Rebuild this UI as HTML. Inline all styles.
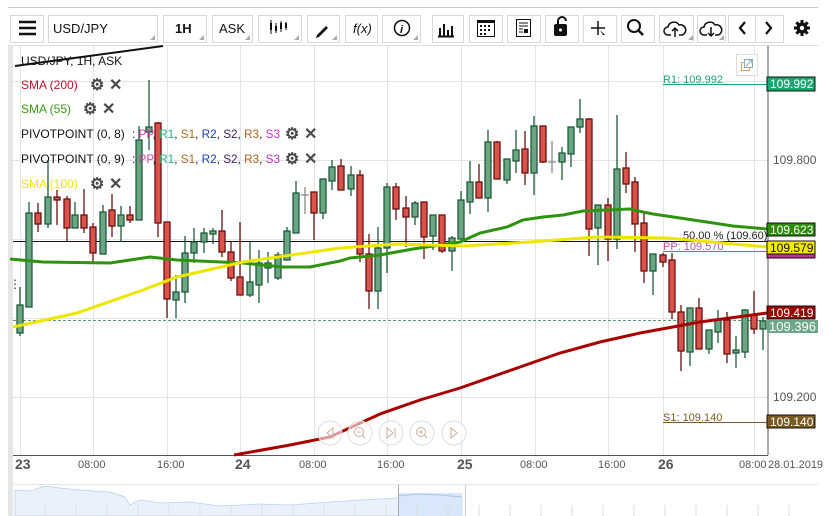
<!DOCTYPE html>
<html><head><meta charset="utf-8"><style>
body{margin:0;width:829px;height:516px;overflow:hidden;background:#fff;font-family:"Liberation Sans",sans-serif}
svg{position:absolute;left:0;top:0}
.b{fill:#fff;stroke:#d8d8d8}
text{font-family:"Liberation Sans",sans-serif}
</style></head><body>
<svg width="829" height="516" viewBox="0 0 829 516">
<line x1="8" y1="7.5" x2="818" y2="7.5" stroke="#ccc"/>
<line x1="8" y1="45.5" x2="818" y2="45.5" stroke="#ddd"/>
<rect class="b" x="10.5" y="15.5" width="33" height="27"/>
<rect class="b" x="48.5" y="15.5" width="109" height="27"/>
<rect class="b" x="163.5" y="15.5" width="43" height="27"/>
<rect class="b" x="212.5" y="15.5" width="40" height="27"/>
<rect class="b" x="258.5" y="15.5" width="43" height="27"/>
<rect class="b" x="307.5" y="15.5" width="32" height="27"/>
<rect class="b" x="345.5" y="15.5" width="32" height="27"/>
<rect class="b" x="382.5" y="15.5" width="38" height="27"/>
<rect class="b" x="432.5" y="15.5" width="31" height="27"/>
<rect class="b" x="469.5" y="15.5" width="33" height="27"/>
<rect class="b" x="507.5" y="15.5" width="33" height="27"/>
<rect class="b" x="545.5" y="15.5" width="33" height="27"/>
<rect class="b" x="583.5" y="15.5" width="33" height="27"/>
<rect class="b" x="621.5" y="15.5" width="33" height="27"/>
<rect class="b" x="659.5" y="15.5" width="34" height="27"/>
<rect class="b" x="697.5" y="15.5" width="28" height="27"/>
<rect class="b" x="728.5" y="15.5" width="55" height="27"/>
<line x1="755.5" y1="15" x2="755.5" y2="43" stroke="#ddd"/>
<path d="M19 22h17M19 28h17M19 34h17" stroke="#111" stroke-width="2.4"/>
<text x="53" y="33" font-size="13" fill="#111">USD/JPY</text>
<text x="175" y="33" font-size="13" font-weight="bold" fill="#111">1H</text>
<text x="219" y="33" font-size="13" fill="#111">ASK</text>
<g fill="#aaa"><path d="M155 40h-5l5-5z"/><path d="M204 40h-5l5-5z"/><path d="M250 40h-5l5-5z"/><path d="M299 40h-5l5-5z"/><path d="M337 40h-5l5-5z"/><path d="M418 40h-5l5-5z"/><path d="M693 40h-5l5-5z"/><path d="M724 40h-5l5-5z"/></g>
<path d="M271 20v14M276 23v10M281 21v11M286 22v8" stroke="#111" stroke-width="1"/>
<g fill="#111"><rect x="270" y="23" width="2" height="7"/><rect x="275" y="26" width="2" height="5"/><rect x="280" y="23" width="2" height="6"/><rect x="285" y="23" width="2" height="5"/></g>
<path d="M317 35l9-9 2 2-9 9-3 1z" fill="#111"/>
<text x="353" y="33" font-size="13" font-style="italic" font-family="Liberation Serif" fill="#111">f(x)</text>
<circle cx="402" cy="28" r="7.5" fill="none" stroke="#111" stroke-width="1.5"/><text x="400" y="33" font-size="11" font-weight="bold" font-style="italic" font-family="Liberation Serif" fill="#111">i</text>
<path d="M440 36v-8M444 36v-12M448 36v-6M452 36v-10M438 36.5h16" stroke="#111" stroke-width="2"/>
<rect x="477.5" y="20.5" width="17" height="16" fill="#fff" stroke="#111"/><rect x="477" y="20" width="18" height="3" fill="#111"/>
<g fill="#111"><rect x="480" y="25" width="2" height="2"/><rect x="484" y="25" width="2" height="2"/><rect x="488" y="25" width="2" height="2"/><rect x="480" y="29" width="2" height="2"/><rect x="484" y="29" width="2" height="2"/><rect x="488" y="29" width="2" height="2"/><rect x="480" y="33" width="2" height="2"/><rect x="484" y="33" width="2" height="2"/></g>
<rect x="516.5" y="19.5" width="14" height="17" fill="#fff" stroke="#111"/><path d="M519 23h9M519 26h9M519 29h4M519 32h4" stroke="#111"/><rect x="524" y="29" width="4" height="4" fill="#111"/>
<path d="M558 24v-3a4 4 0 0 1 8 0" fill="none" stroke="#111" stroke-width="2"/><rect x="554" y="24" width="13" height="12" rx="2" fill="#111"/><circle cx="560.5" cy="30" r="1.5" fill="#fff"/>
<path d="M598 21v14M591 28h14" stroke="#111" stroke-width="1.5"/><path d="M600 30l5 5-2 0z" fill="#111"/>
<circle cx="634" cy="26" r="6" fill="none" stroke="#111" stroke-width="2"/><path d="M638 30l5 5" stroke="#111" stroke-width="2.5"/>
<path d="M671 35h-3a4 4 0 0 1 0-8 6 6 0 0 1 11-2 4 4 0 0 1 3 10h-3" fill="none" stroke="#111" stroke-width="1.5"/><path d="M675 37v-9M672 31l3-3 3 3" fill="none" stroke="#111" stroke-width="1.5"/>
<path d="M707 35h-3a4 4 0 0 1 0-8 6 6 0 0 1 11-2 4 4 0 0 1 3 10h-3" fill="none" stroke="#111" stroke-width="1.5"/><path d="M711 27v9M708 33l3 3 3-3" fill="none" stroke="#111" stroke-width="1.5"/>
<path d="M745 22l-5 6 5 6M766 22l5 6-5 6" fill="none" stroke="#111" stroke-width="2.2"/>
<g transform="translate(802 28)"><circle r="5.5" fill="#111"/><path d="M-1.5-8h3v16h-3zM-8-1.5h16v3h-16z" fill="#111"/><path d="M-1.5-8h3v16h-3zM-8-1.5h16v3h-16z" fill="#111" transform="rotate(45)"/><circle r="2.2" fill="#fff"/></g>

<rect x="8" y="46" width="5" height="470" fill="#e6e6e6"/>
<g stroke="#e3e3e3" stroke-width="1">
<path d="M13 81.5h755M13 160.5h755M13 239.5h755M13 318.5h755M13 397.5h755"/>
<path d="M20.5 46v409M93.5 46v409M167.5 46v409M240.5 46v409M314.5 46v409M387.5 46v409M461.5 46v409M535.5 46v409M608.5 46v409M663.5 46v409M754.5 46v409"/>
</g>
<line x1="768" y1="46" x2="768" y2="455" stroke="#555"/>
<line x1="13" y1="455.5" x2="768" y2="455.5" stroke="#555"/>
<line x1="13" y1="484.5" x2="818" y2="484.5" stroke="#e6e6e6"/>

<line x1="13" y1="241.5" x2="768" y2="241.5" stroke="#111"/>
<line x1="13" y1="320.5" x2="768" y2="320.5" stroke="#5a9a78" stroke-dasharray="3,2"/>
<line x1="663" y1="84.5" x2="768" y2="84.5" stroke="#1aa870"/>
<line x1="663" y1="251.5" x2="768" y2="251.5" stroke="#c050a0"/>
<line x1="663" y1="422.5" x2="768" y2="422.5" stroke="#7a5a20"/>
<text x="663" y="83" font-size="11" fill="#1aa870">R1: 109.992</text>
<text x="683" y="239" font-size="11" fill="#222">50.00 % (109.60)</text>
<text x="663" y="250" font-size="11" fill="#c050a0">PP: 109.570</text>
<text x="663" y="421" font-size="11" fill="#7a5a20">S1: 109.140</text>

<g stroke-width="1.3">
<g stroke="#1f5a3a" fill="#6aa684">
<path d="M20 287v49M29 202v105M48 160v68M75 202v26M103 205v49M121 206v36M139 126v94M149 80v70M176 275v43M185 236v67M194 228v35M204 228v25M213 228v16M250 242v55M259 250v53M268 252v31M278 252v28M287 227v33M296 181v52M323 179v40M332 160v30M351 166v30M378 227v82M387 183v90M415 201v24M433 215v35M452 236v35M461 191v48M470 161v53M488 130v82M507 159v25M516 130v43M534 116v79M562 147v33M571 127v40M580 99v34M598 205v60M617 115v134M653 254v41M690 308v58M709 330v24M718 310v33M736 336v32M745 309v49M763 317v33"/>
<rect x="17" y="305" width="6" height="28"/><rect x="26" y="213" width="6" height="94"/><rect x="45" y="197" width="6" height="27"/><rect x="72" y="215" width="6" height="13"/><rect x="100" y="212" width="6" height="42"/><rect x="118" y="215" width="6" height="11"/><rect x="136" y="140" width="6" height="80"/><rect x="146" y="127" width="6" height="5"/><rect x="173" y="292" width="6" height="8"/><rect x="182" y="253" width="6" height="39"/><rect x="191" y="242" width="6" height="11"/><rect x="201" y="233" width="6" height="9"/><rect x="210" y="231" width="6" height="3"/><rect x="247" y="282" width="6" height="13"/><rect x="256" y="263" width="6" height="22"/><rect x="265" y="263" width="6" height="5"/><rect x="275" y="255" width="6" height="23"/><rect x="284" y="231" width="6" height="29"/><rect x="293" y="193" width="6" height="40"/><rect x="320" y="179" width="6" height="34"/><rect x="329" y="167" width="6" height="14"/><rect x="348" y="175" width="6" height="14"/><rect x="375" y="248" width="6" height="43"/><rect x="384" y="187" width="6" height="61"/><rect x="412" y="203" width="6" height="14"/><rect x="430" y="215" width="6" height="21"/><rect x="449" y="238" width="6" height="13"/><rect x="458" y="200" width="6" height="39"/><rect x="467" y="182" width="6" height="20"/><rect x="485" y="142" width="6" height="56"/><rect x="504" y="159" width="6" height="21"/><rect x="513" y="150" width="6" height="11"/><rect x="531" y="126" width="6" height="47"/><rect x="559" y="153" width="6" height="9"/><rect x="568" y="127" width="6" height="27"/><rect x="577" y="119" width="6" height="8"/><rect x="595" y="205" width="6" height="23"/><rect x="614" y="169" width="6" height="70"/><rect x="650" y="254" width="6" height="17"/><rect x="687" y="308" width="6" height="44"/><rect x="706" y="330" width="6" height="19"/><rect x="715" y="320" width="6" height="12"/><rect x="733" y="350" width="6" height="3"/><rect x="742" y="310" width="6" height="42"/><rect x="760" y="321" width="6" height="8"/>
</g>
<g stroke="#6a1010" fill="#d9534a">
<path d="M38 203v29M57 190v35M67 196v45M84 189v44M93 223v40M112 194v43M130 206v17M158 122v115M167 222v96M222 210v47M231 242v39M240 222v73M314 192v48M341 159v31M360 170v92M369 234v75M396 183v37M406 196v51M424 202v57M442 215v38M479 164v34M497 141v38M525 131v54M543 126v37M589 118v138M608 198v63M626 152v41M635 177v75M644 212v71M663 253v14M672 253v66M681 305v66M699 298v51M727 312v51M754 291v43"/>
<rect x="35" y="213" width="6" height="11"/><rect x="54" y="197" width="6" height="3"/><rect x="64" y="199" width="6" height="29"/><rect x="81" y="215" width="6" height="13"/><rect x="90" y="227" width="6" height="26"/><rect x="109" y="210" width="6" height="16"/><rect x="127" y="215" width="6" height="5"/><rect x="155" y="123" width="6" height="100"/><rect x="164" y="222" width="6" height="77"/><rect x="219" y="231" width="6" height="21"/><rect x="228" y="252" width="6" height="26"/><rect x="237" y="277" width="6" height="18"/><rect x="311" y="192" width="6" height="21"/><rect x="338" y="166" width="6" height="24"/><rect x="357" y="175" width="6" height="79"/><rect x="366" y="254" width="6" height="37"/><rect x="393" y="187" width="6" height="22"/><rect x="403" y="208" width="6" height="9"/><rect x="421" y="202" width="6" height="35"/><rect x="439" y="215" width="6" height="36"/><rect x="476" y="182" width="6" height="16"/><rect x="494" y="142" width="6" height="37"/><rect x="522" y="149" width="6" height="24"/><rect x="540" y="126" width="6" height="36"/><rect x="586" y="119" width="6" height="110"/><rect x="605" y="205" width="6" height="34"/><rect x="623" y="168" width="6" height="16"/><rect x="632" y="182" width="6" height="42"/><rect x="641" y="223" width="6" height="48"/><rect x="660" y="255" width="6" height="7"/><rect x="669" y="260" width="6" height="52"/><rect x="678" y="312" width="6" height="39"/><rect x="696" y="308" width="6" height="41"/><rect x="724" y="320" width="6" height="34"/><rect x="751" y="315" width="6" height="14"/>
</g>
<path d="M305 187v27M301 195h8M552 141v32M548 162h8" stroke="#888" fill="none"/>
</g>

<path d="M10 259 L43 262 L110 263 L150 257 L177 260 L243 263 L283 267 L310 267 L340 261 L350 258 L380 255 L413 249 L460 242 L480 233 L507 227 L523 220 L543 217 L563 215 L583 211 L630 209 L643 212 L653 214 L700 221 L733 226 L767 229" fill="none" stroke="#2e9410" stroke-width="3"/>
<path d="M13 327 L77 313 L143 290 L177 277 L243 262 L340 248 L397 244 L463 246 L530 242 L597 237 L667 238 L767 247" fill="none" stroke="#ede600" stroke-width="3"/>
<path d="M234 455 L290 445 L330 437 L380 414 L420 400 L460 388 L500 374 L560 353 L600 342 L640 333 L700 322 L767 313" fill="none" stroke="#a80000" stroke-width="3"/>
<path d="M15 66 L163 46" stroke="#111" stroke-width="2"/>

<g font-size="12">
<text x="21" y="65" fill="#111">USD/JPY, 1H, ASK</text>
<text x="21" y="89" fill="#c0102a">SMA (200)</text>
<text x="21" y="113" fill="#3a9a18">SMA (55)</text>
<text x="21" y="138" fill="#111">PIVOTPOINT (0, 8)</text>
<text x="132" y="138" fill="#111" textLength="148" lengthAdjust="spacingAndGlyphs">: <tspan fill="#d040a0">PP</tspan>, <tspan fill="#20b080">R1</tspan>, <tspan fill="#a07020">S1</tspan>, <tspan fill="#2040c0">R2</tspan>, <tspan fill="#402060">S2</tspan>, <tspan fill="#b06020">R3</tspan>, <tspan fill="#c030c0">S3</tspan></text>
<text x="21" y="163" fill="#111">PIVOTPOINT (0, 9)</text>
<text x="132" y="163" fill="#111" textLength="148" lengthAdjust="spacingAndGlyphs">: <tspan fill="#d040a0">PP</tspan>, <tspan fill="#20b080">R1</tspan>, <tspan fill="#a07020">S1</tspan>, <tspan fill="#2040c0">R2</tspan>, <tspan fill="#402060">S2</tspan>, <tspan fill="#b06020">R3</tspan>, <tspan fill="#c030c0">S3</tspan></text>
<text x="21" y="188" fill="#f0e600">SMA (100)</text>
</g>
<g font-size="16" font-weight="bold" fill="#4a4a4a">
<text x="90" y="90">⚙</text><text x="109" y="90">✕</text>
<text x="83" y="114">⚙</text><text x="102" y="114">✕</text>
<text x="285" y="139">⚙</text><text x="304" y="139">✕</text>
<text x="285" y="164">⚙</text><text x="304" y="164">✕</text>
<text x="90" y="189">⚙</text><text x="109" y="189">✕</text>
</g>
<text x="9" y="288" font-size="12" fill="#333">⋮</text>
<rect x="736.5" y="54.5" width="21" height="21" fill="#fff" stroke="#ddd"/>
<rect x="741.5" y="62.5" width="8" height="8" fill="none" stroke="#e0a060"/><rect x="744.5" y="59.5" width="8" height="8" fill="#fff" stroke="#8ab"/><path d="M746 66l6-6M748 60h4v4" stroke="#8ab" fill="none"/>

<g font-size="12">
<rect x="767" y="77" width="48" height="14" fill="#1aa870" stroke="#111"/><text x="770" y="88" fill="#fff">109.992</text>
<text x="773" y="164" fill="#555">109.800</text>
<rect x="767" y="253" width="48" height="5" fill="#c03090" stroke="#111"/>
<rect x="767" y="223" width="48" height="13" fill="#2c8c0a" stroke="#111"/><text x="770" y="234" fill="#fff">109.623</text>
<rect x="767" y="241" width="48" height="13" fill="#f2ea00" stroke="#111"/><text x="770" y="252" fill="#111">109.579</text>
<rect x="767" y="320" width="51" height="13" fill="#6ea88a"/><text x="769" y="331" fill="#fff" font-size="13">109.396</text>
<rect x="767" y="306" width="48" height="13" fill="#a00000" stroke="#111"/><text x="770" y="317" fill="#fff">109.419</text>
<text x="773" y="401" fill="#555">109.200</text>
<rect x="767" y="415" width="48" height="13" fill="#7a5a20" stroke="#111"/><text x="770" y="426" fill="#fff">109.140</text>
</g>

<g fill="rgba(255,255,255,0.6)" stroke="#ddd">
<circle cx="330" cy="433" r="12"/><circle cx="360" cy="433" r="12"/><circle cx="391" cy="433" r="12"/><circle cx="422" cy="433" r="12"/><circle cx="454" cy="433" r="12"/>
</g>
<g fill="none" stroke="#c8b0a0" stroke-width="1">
<path d="M333 428l-6 5 6 5z"/><circle cx="359" cy="432" r="4.5"/><path d="M357 432h4M362 435l3 3"/>
<path d="M387 428v10l6-5z M395 428v10"/><circle cx="421" cy="432" r="4.5"/><path d="M419 432h4M421 430v4M424 435l3 3"/><path d="M451 428v10l6-5z"/>
</g>

<g font-size="11" fill="#555">
<text x="15" y="469" font-size="14" font-weight="bold">23</text>
<text x="78" y="468">08:00</text><text x="157" y="468">16:00</text>
<text x="235" y="469" font-size="14" font-weight="bold">24</text>
<text x="299" y="468">08:00</text><text x="377" y="468">16:00</text>
<text x="457" y="469" font-size="14" font-weight="bold">25</text>
<text x="520" y="468">08:00</text><text x="598" y="468">16:00</text>
<text x="658" y="469" font-size="14" font-weight="bold">26</text>
<text x="739" y="468">08:00</text><text x="768" y="468">28.01.2019</text>
</g>

<path d="M15 490 L30 491 L45 486 L60 488 L80 490 L110 492 L125 497 L130 505 L140 500 L160 503 L190 502 L220 506 L260 504 L290 505 L330 502 L360 500 L398 498 L420 496 L462 498 L462 516 L15 516Z" fill="#eaf1fc" stroke="#b8d0f0" stroke-width="0.8"/>
<rect x="398" y="493" width="64" height="23" fill="#d9e7fb"/>
<path d="M398 496 L420 494 L440 495 L462 497" stroke="#a8c4ee" fill="none"/>
<line x1="398.5" y1="485" x2="398.5" y2="516" stroke="#aaa"/>
<line x1="465.5" y1="485" x2="465.5" y2="516" stroke="#ccc"/>
<g stroke="#ddd"><path d="M45 505v11M76 505v11M107 505v11M138 505v11M169 505v11M200 505v11M231 505v11M262 505v11M293 505v11M324 505v11M355 505v11M386 505v11M417 505v11M448 505v11M479 505v11M510 505v11M541 505v11M572 505v11M603 505v11M634 505v11M665 505v11M696 505v11M727 505v11M758 505v11M789 505v11"/></g>
</svg>
</body></html>
